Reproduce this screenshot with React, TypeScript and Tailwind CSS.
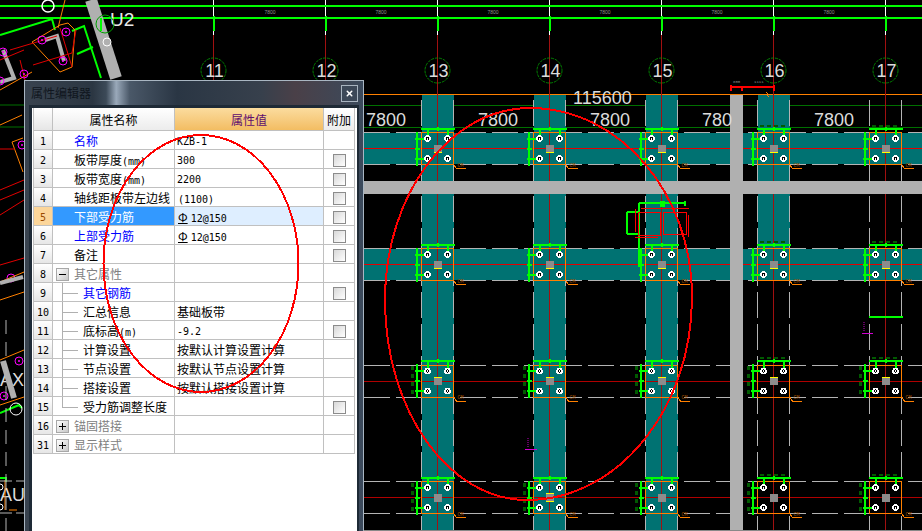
import type { ReactNode } from 'react';
import { X } from 'lucide-react';

const axes = [
  { label: '11', x: 213.5 },
  { label: '12', x: 325.5 },
  { label: '13', x: 437.5 },
  { label: '14', x: 549.5 },
  { label: '15', x: 661.5 },
  { label: '16', x: 773.5 },
  { label: '17', x: 885.5 },
];
const nodeXs = [437.5, 549.5, 661.5, 773.5, 885.5];
const nodeYs = [148.5, 264.5, 381, 497.5];

const TEAL = '#007272';
const GREEN = '#00ff00';
const ORANGE = '#ff8000';
const GREY = '#b0b0b0';
const LINE_GREY = '#b4b4b4';

const CadNode = ({ x, y, row }: { x: number; y: number; row: number }) => {
  const yellowBottom = row < 2 || (row === 3 && x === 549.5);
  const yellowTop = row === 2 || (row === 3 && x === 549.5);
  const bolts = [
    [x - 10, y - 10],
    [x + 10, y - 10],
    [x - 10, y + 10],
    [x + 10, y + 10],
  ];
  return (
    <g>
      {/* faint rebar labels */}
      {row > 1 && <path d={`M${x - 25} ${y - 15}v30`} stroke="#005a00" strokeWidth={3} strokeDasharray="4 4" />}
      {x > 700 && <path d={`M${x - 14} ${y - 23}h28`} stroke="#005a00" strokeWidth={2} strokeDasharray="4 3" />}
      <rect x={x - 16} y={y - 16} width={32} height={32} fill="none" stroke={ORANGE} />
      <path d={`M${x + 16} ${y + 16}l3 4h9`} fill="none" stroke={ORANGE} />
      <text x={x + 20} y={y + 18} fontSize="5" fill="#a05000" fontFamily="Liberation Mono, monospace">CM</text>
      <rect x={x - 4} y={y - 4} width={8} height={8} fill="#8c8c8c" />
      {yellowBottom && <rect x={x - 4} y={y + 3.5} width={8} height={1} fill="#ffff00" />}
      {yellowTop && <rect x={x - 4} y={y - 4.5} width={8} height={1} fill="#ffff00" />}
      {/* top and left rebar */}
      <path d={`M${x - 17} ${y - 20}h34`} stroke={GREEN} strokeWidth={2} />
      <path d={`M${x - 10} ${y - 21}v8M${x} ${y - 22}v4M${x + 10} ${y - 21}v8`} stroke={GREEN} strokeWidth={2} />
      <path d={`M${x - 21} ${y - 17}v34`} stroke={GREEN} strokeWidth={2} />
      <path d={`M${x - 23} ${y - 10}h10M${x - 23} ${y}h5M${x - 23} ${y + 10}h10`} stroke={GREEN} strokeWidth={2} />
      {bolts.map(([cx, cy], i) => (
        <g key={i}>
          <circle cx={cx} cy={cy} r={2.5} fill="#000" stroke="#fff" strokeWidth={1.5} />
          <rect x={cx - 0.5} y={cy - 1} width={1} height={2} fill="#fff" />
        </g>
      ))}
    </g>
  );
};

const CadDrawing = () => (
  <svg className="absolute inset-0" width={922} height={531} viewBox="0 0 922 531" shapeRendering="crispEdges">
    {/* axis top rails */}
    {axes.map((a) => (
      <path key={a.label} d={`M${a.x} 0v35`} stroke="#fff" />
    ))}
    {axes.map((a) => (
      <path key={a.label} d={`M${a.x} 16v15`} stroke={GREEN} strokeWidth={2} />
    ))}
    <rect x={0} y={5} width={922} height={2} fill={GREEN} />
    <rect x={0} y={17} width={922} height={2} fill={GREEN} />
    {[270, 381, 493, 605, 717, 829].map((x) => (
      <text key={x} x={x} y={14} fontSize="5" fill="#909090" textAnchor="middle" fontFamily="Liberation Sans, sans-serif">7800</text>
    ))}

    {/* dim lines */}
    <path d="M364 105.5H922M364 127.5H922" stroke="#007000" />
    <path d="M364 94.5H922" stroke={ORANGE} />

    {/* teal strips */}
    <rect x={422} y={95} width={32} height={436} fill={TEAL} />
    <rect x={534} y={95} width={32} height={436} fill={TEAL} />
    <rect x={646} y={95} width={32} height={436} fill={TEAL} />
    <rect x={758} y={95} width={32} height={185} fill={TEAL} />
    <rect x={364} y={133} width={558} height={31} fill={TEAL} />
    <rect x={364} y={249} width={558} height={31} fill={TEAL} />

    {/* strip edges */}
    {[132.5, 164.5, 248.5, 280.5, 365, 397, 481, 513].map((y) => (
      <path key={y} d={`M364 ${y}H922`} stroke={LINE_GREY} strokeDasharray="26 6" />
    ))}
    {[421.5, 453.5, 533.5, 565.5, 645.5, 677.5, 757.5, 789.5].map((x) => (
      <path key={x} d={`M${x} 100V531`} stroke={LINE_GREY} strokeDasharray="26 6" />
    ))}
    <path d="M869.5 100V531M901.5 100V531" stroke={LINE_GREY} strokeDasharray="26 6" />

    {/* axis lines */}
    {axes.map((a) => (
      <path key={a.label} d={`M${a.x} 35V531`} stroke="#a01010" />
    ))}
    <path d="M364 148.5H922M364 264.5H922" stroke="#e60000" />
    <path d="M364 381.5H922M364 497.5H922" stroke="#b00000" />

    {/* grey walls */}
    <rect x={364} y={181} width={558} height={13} fill={GREY} />
    <rect x={730} y={95} width={13} height={436} fill={GREY} />

    {nodeYs.map((y, row) => nodeXs.map((x) => <CadNode key={`${x}-${y}`} x={x} y={y} row={row} />))}

    {/* axis bubbles */}
    <g shapeRendering="auto">
      {axes.map((a) => (
        <g key={a.label}>
          <circle cx={a.x} cy={70.5} r={12.5} fill="none" stroke="#00a000" strokeWidth={0.8} strokeDasharray="3 1" />
          <text x={a.x + 1} y={77} fontSize="18" fill="#dcdcdc" textAnchor="middle" fontFamily="Liberation Sans, sans-serif">{a.label}</text>
        </g>
      ))}
      <text x={573} y={104} fontSize="18" fill="#dcdcdc" fontFamily="Liberation Sans, sans-serif">115600</text>
      {[366, 478, 590, 814].map((x) => (
        <text key={x} x={x} y={126} fontSize="18" fill="#dcdcdc" fontFamily="Liberation Sans, sans-serif">7800</text>
      ))}
      <text x={702} y={126} fontSize="18" fill="#dcdcdc" fontFamily="Liberation Sans, sans-serif">780</text>
      <text x={110} y={26} fontSize="19" fill="#e8e8e8" fontFamily="Liberation Sans, sans-serif">U2</text>
      <text x={0} y={386} fontSize="18" fill="#dcdcdc" fontFamily="Liberation Sans, sans-serif">AX</text>
      <text x={0} y={501} fontSize="18" fill="#dcdcdc" fontFamily="Liberation Sans, sans-serif">AU</text>
    </g>

    {/* red dimension over axis 16 */}
    <path d="M730 87h44" stroke="#ff0000" strokeWidth={2} />
    <path d="M731 85v6M742 87v4M774 85v6" stroke="#ff0000" strokeWidth={2} />
    <path d="M766 92l2 2-1 1 2 2" stroke={ORANGE} fill="none" />
    <text x={733} y={83} fontSize="4" fill="#909090" fontFamily="Liberation Mono, monospace">800</text>
    <text x={754} y={83} fontSize="4" fill="#909090" fontFamily="Liberation Mono, monospace">1111</text>

    {/* detail at axis 15 */}
    <g fill="none">
      <path d="M639 203h46M639 203v64M685 201v5M627 212v22M627 212h12M627 234h12" stroke={GREEN} strokeWidth={2} />
      <rect x={660} y={201} width={5} height={6} fill={GREEN} />
      <rect x={638} y={212} width={22} height={23} stroke="#ff0000" />
      <rect x={663} y={212} width={23} height={22} stroke="#ff0000" />
      <path d="M641 208h48M635 237h23M635 209v23M688 215v22" stroke="#ff0000" />
    </g>

    {/* small beam and section marks */}
    <path d="M869 317h34" stroke={GREEN} strokeWidth={2} />
    <path d="M862 333.5h11" stroke="#d000d0" />
    <path d="M525 449.5h12" stroke="#d000d0" />
    <path d="M864 322v10M528 438v10" stroke="#600060" strokeWidth={2} strokeDasharray="1 1" />

    {/* skewed part, top left */}
    <g shapeRendering="auto" fill="none">
      <path d="M91 0L116 78" stroke={GREY} strokeWidth={12} />
      <path d="M45 40L57 36L64 61" stroke={GREY} strokeWidth={4} />
      <path d="M3 50L14 78L0 82" stroke={GREY} strokeWidth={4} />
      <path d="M0 35L52 19L55 30M72 31L84 26L101 78M77 54L93 47M101 18V31" stroke={GREEN} strokeWidth={2} />
      <path d="M32 42L60 25L68 23L75 30L72 67L60 72Z" stroke={ORANGE} />
      <path d="M65 0L58 28M0 90L32 72M0 125L22 115" stroke={ORANGE} />
      <path d="M10 50L57 36M33 65L72 53M60 28L72 67M72 53L76 30" stroke="#e00000" />
      <path d="M0 60L24 50M20 60L30 100" stroke="#e00000" />
      <circle cx={48} cy={6} r={6} stroke="#fff" strokeWidth={1.5} />
      <circle cx={107} cy={42} r={4} stroke="#fff" />
      <circle cx={105} cy={24} r={9} stroke="#00a000" />
      {[[42, 40], [66, 32], [63, 61], [24, 74], [3, 52], [0, 81], [22, 145], [11, 278], [19, 361], [4, 396]].map(([cx, cy]) => (
        <g key={`${cx}-${cy}`}>
          <circle cx={cx} cy={cy} r={4} stroke="#ff00ff" />
          <circle cx={cx} cy={cy} r={1} fill="#ff00ff" />
        </g>
      ))}
      {/* left strip */}
      <path d="M0 105H24M0 127H24" stroke="#007000" />
      <path d="M12 142L23 138M12 142L23 172" stroke={ORANGE} />
      <path d="M0 149H15M0 190L24 180M0 200L24 190M0 215L24 200M0 265L24 258" stroke="#e00000" />
      <path d="M0 282L24 272M0 300L24 292M0 360L24 350M0 405L24 397" stroke={ORANGE} />
      <path d="M0 283L23 277" stroke={GREY} strokeWidth={4} />
      <path d="M3 361L14 398" stroke={GREY} strokeWidth={6} />
      <path d="M0 413L19 405L22 408M0 478H6V482" stroke={GREEN} strokeWidth={2} />
      <circle cx={16} cy={409} r={6} stroke="#fff" />
      <circle cx={0} cy={487} r={3} stroke="#fff" />
      <circle cx={0} cy={507} r={3} stroke="#fff" />
      <path d="M5 480V510M9 510H17" stroke={ORANGE} />
      <path d="M6 320V531" stroke={LINE_GREY} strokeDasharray="14 8" />
      <path d="M0 481H24M0 513H24" stroke={LINE_GREY} strokeDasharray="12 4" />
    </g>
    <rect x={364} y={530} width={558} height={1} fill="#888" />
  </svg>
);

// bitmap-like latin run inside the SimSun-style labels
const M = ({ children }: { children: ReactNode }) => (
  <span className="font-['DejaVu_Sans_Mono',monospace] text-[10px]">{children}</span>
);

const Rebar = () => (
  <span className="pl-px">
    <span className="mr-[3px] underline">Φ</span>
    <M>12@150</M>
  </span>
);

type Row = {
  no: number;
  name: ReactNode;
  value?: ReactNode;
  check?: boolean;
  tone?: 'blue' | 'gray';
  tree?: 'mid' | 'end';
  box?: '+' | '-';
  selected?: boolean;
};

const rows: Row[] = [
  { no: 1, name: '名称', value: <M>KZB-1</M>, tone: 'blue' },
  { no: 2, name: <>板带厚度<M>(mm)</M></>, value: <M>300</M>, check: true },
  { no: 3, name: <>板带宽度<M>(mm)</M></>, value: <M>2200</M>, check: true },
  { no: 4, name: '轴线距板带左边线', value: <span className="pl-px"><M>(1100)</M></span>, check: true },
  { no: 5, name: '下部受力筋', value: <Rebar />, check: true, selected: true },
  { no: 6, name: '上部受力筋', value: <Rebar />, check: true, tone: 'blue' },
  { no: 7, name: '备注', check: true },
  { no: 8, name: '其它属性', tone: 'gray', box: '-' },
  { no: 9, name: '其它钢筋', check: true, tone: 'blue', tree: 'mid' },
  { no: 10, name: '汇总信息', value: '基础板带', tree: 'mid' },
  { no: 11, name: <>底标高<M>(m)</M></>, value: <M>-9.2</M>, check: true, tree: 'mid' },
  { no: 12, name: '计算设置', value: '按默认计算设置计算', tree: 'mid' },
  { no: 13, name: '节点设置', value: '按默认节点设置计算', tree: 'mid' },
  { no: 14, name: '搭接设置', value: '按默认搭接设置计算', tree: 'mid' },
  { no: 15, name: '受力筋调整长度', check: true, tree: 'end' },
  { no: 16, name: '锚固搭接', tone: 'gray', box: '+' },
  { no: 31, name: '显示样式', tone: 'gray', box: '+' },
];

const TreeLink = ({ kind }: { kind: 'mid' | 'end' }) => (
  <svg width={21} height={20} className="shrink-0" shapeRendering="crispEdges">
    <path d={kind === 'mid' ? 'M0.5 0V20M0.5 10.5H16' : 'M0.5 0V10.5H16'} stroke="#b0b0b0" fill="none" />
  </svg>
);

const ExpandBox = ({ sign }: { sign: '+' | '-' }) => (
  <span className="relative mr-[5px] flex h-[13px] w-[13px] shrink-0 items-center justify-center border border-[#a8a8a8] bg-gradient-to-br from-white to-[#c8c8c8]">
    <span className="h-px w-[7px] bg-black" />
    {sign === '+' && <span className="absolute h-[7px] w-px bg-black" />}
  </span>
);

const CheckBox = () => (
  <span className="h-[13px] w-[13px] border border-[#8c8c8c] bg-gradient-to-br from-[#d8d8d8] to-white" />
);

const cell = 'flex items-center border-r border-b border-[#c0c0c0] pt-[2px] overflow-hidden whitespace-nowrap';

const PropertyRow = ({ row }: { row: Row }) => {
  const color = row.selected
    ? 'bg-[#3399ff] text-white'
    : row.tone === 'blue'
      ? 'text-[#0000ff]'
      : row.tone === 'gray'
        ? 'text-[#808080]'
        : 'text-black';
  return (
    <>
      <div
        className={`${cell} h-[19px] justify-center font-['DejaVu_Sans_Mono',monospace] text-[10px] ${
          row.selected ? 'bg-[#fcd69a] text-[#9a4a00]' : 'bg-gradient-to-b from-white to-[#e6e6e6] text-black'
        }`}
      >
        {row.no}
      </div>
      <div className={`${cell} h-[19px] ${color} ${row.tree ? 'pl-[9px]' : row.box ? 'pl-[3px]' : 'pl-[21px]'}`}>
        {row.tree && <TreeLink kind={row.tree} />}
        {row.box && <ExpandBox sign={row.box} />}
        <span>{row.name}</span>
      </div>
      <div className={`${cell} h-[19px] pl-[2px] text-black ${row.selected ? 'bg-[#deeeff]' : ''}`}>{row.value}</div>
      <div className={`${cell} h-[19px] justify-center`}>{row.check && <CheckBox />}</div>
    </>
  );
};

const PropertyWindow = () => (
  <div className="absolute left-[24px] top-[80px] flex h-[451px] w-[340px] flex-col border border-b-0 border-[#a9b6c2] bg-[linear-gradient(90deg,#39434f_0%,#2b3642_20%,#3c4a58_24%,#9aa9ba_27%,#4a5868_31%,#2a3644_45%,#37404c_70%,#4a4048_80%,#3b4a5c_100%)] font-['Noto_Sans_CJK_SC',sans-serif] text-[12px]">
    <div className="flex h-[24px] shrink-0 items-center justify-between pl-[6px] pr-[5px]">
      <span className="text-[12px] text-[#10161e]">属性编辑器</span>
      <span className="flex h-[17px] w-[17px] items-center justify-center border border-[#a8b4c0] bg-[#3c4858] text-white">
        <X size={9} strokeWidth={4} />
      </span>
    </div>
    <div className="mx-[4px] flex-1 border-[3px] border-b-0 border-r-2 border-[#1e2a36] bg-white pl-px">
      <div className="grid grid-cols-[19px_122px_149px_31px] border-l border-[#c0c0c0]">
        <div className={`${cell} h-[23px] bg-gradient-to-b from-white to-[#e6e6e6]`} />
        <div className={`${cell} h-[23px] justify-center bg-gradient-to-b from-white to-[#ececec] text-[12px] text-black`}>属性名称</div>
        <div className={`${cell} h-[23px] justify-center bg-gradient-to-b from-[#fbdc9e] to-[#f3bd62] text-[#5f0f6f]`}>属性值</div>
        <div className={`${cell} h-[23px] justify-center bg-gradient-to-b from-white to-[#ececec] text-black`}>附加</div>
        {rows.map((row) => (
          <PropertyRow key={row.no} row={row} />
        ))}
      </div>
    </div>
  </div>
);

const App = () => (
  <div className="relative h-[531px] w-[922px] overflow-hidden bg-black">
    <CadDrawing />
    <PropertyWindow />
    {/* hand drawn markup, over everything */}
    <svg className="absolute inset-0" width={922} height={531} viewBox="0 0 922 531" shapeRendering="crispEdges" fill="none">
      <ellipse cx={201} cy={263.5} rx={97.5} ry={128.5} stroke="#ff0000" strokeWidth={2} />
      <path
        d="M530 108C619.5 108 692 192.6 692 297C692 409 618 500 527 500C448.6 500 385 410.5 385 300C385 194 450 108 530 108Z"
        stroke="#ff0000"
        strokeWidth={2}
      />
    </svg>
  </div>
);

export default App;
